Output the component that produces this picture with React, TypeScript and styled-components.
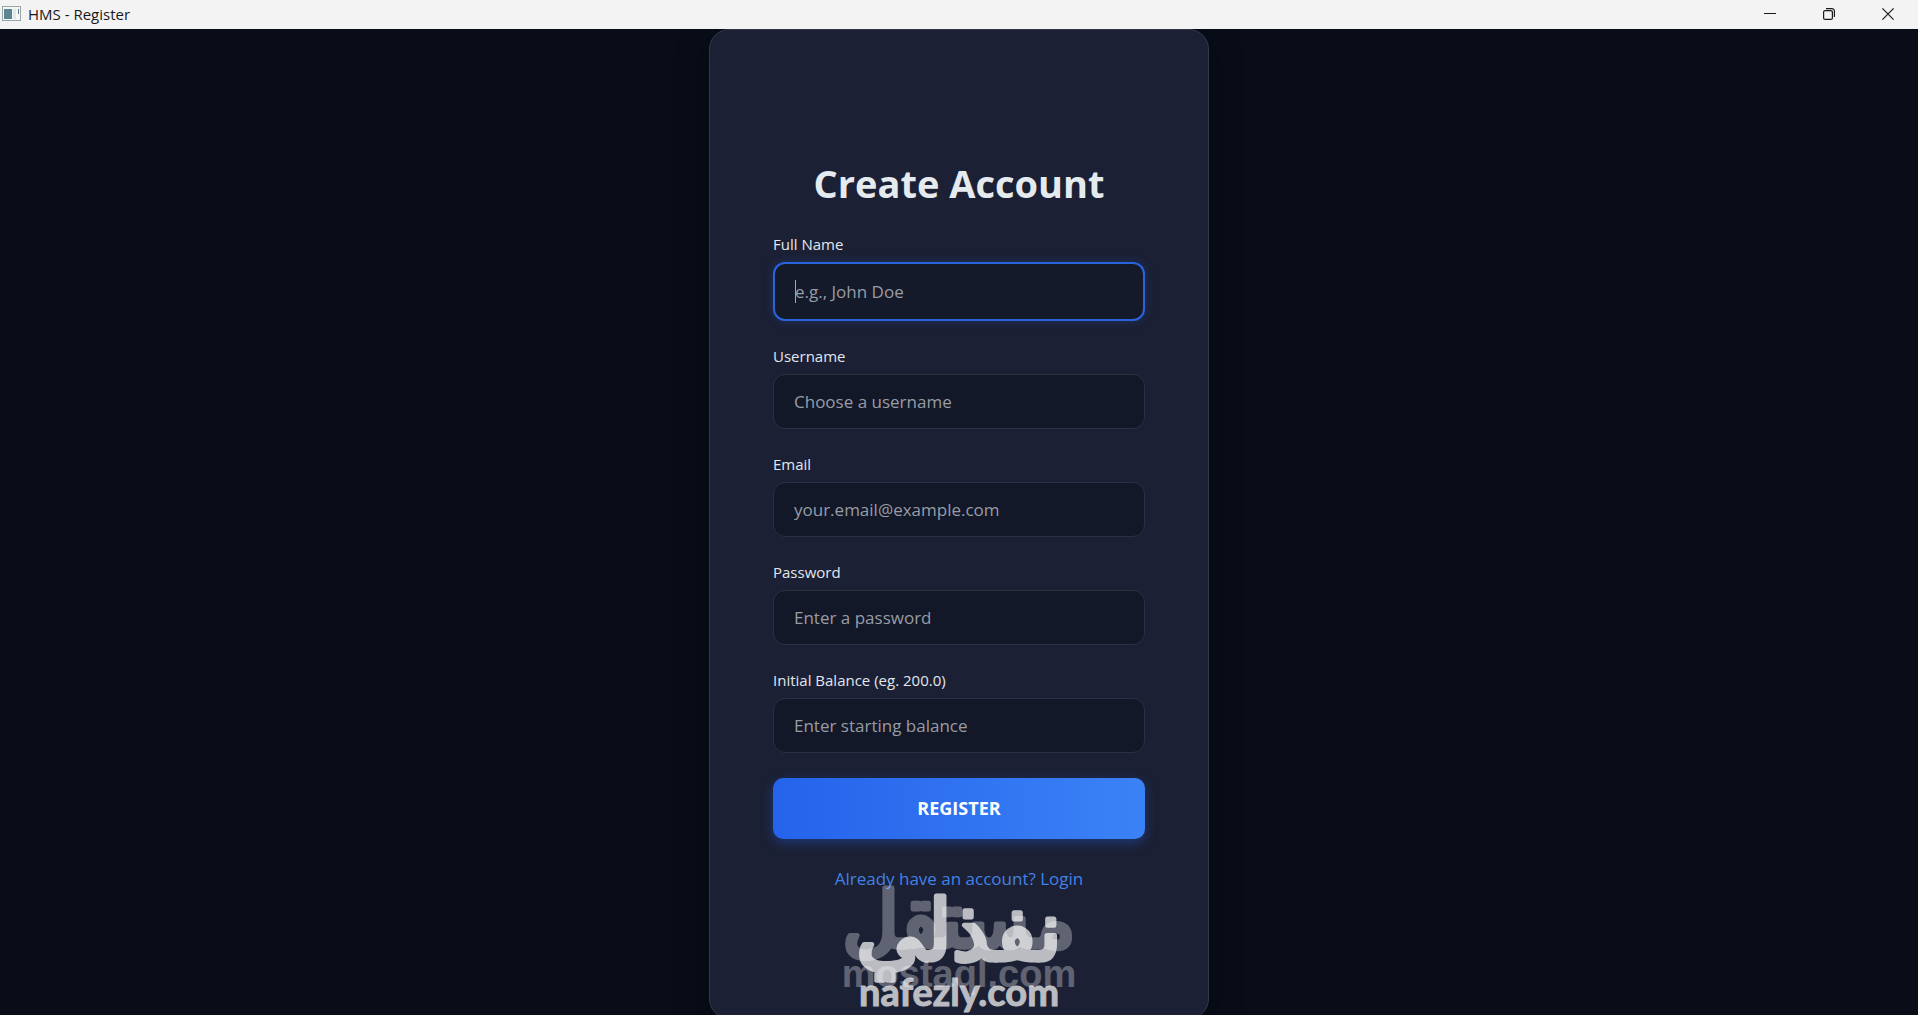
import React, { useState } from "react";
import styled, { createGlobalStyle, css } from "styled-components";

const GlobalStyle = createGlobalStyle`
  *, *::before, *::after { box-sizing: border-box; }
  html, body { margin: 0; height: 100%; overflow: hidden; }
  body {
    background: #080d18;
    font-family: "Segoe UI", "Open Sans", "Noto Sans", sans-serif;
  }
`;

const Window = styled.div`
  display: flex;
  flex-direction: column;
  height: 100vh;
  overflow: hidden;
`;

const TitleBar = styled.header`
  display: flex;
  align-items: center;
  flex: none;
  height: 29px;
  padding: 0 1px 1px 2px;
  background: #f3f3f3;
  color: #1a1a1a;
`;

const WindowTitle = styled.span`
  flex: 1;
  padding-left: 7px;
  font-size: 15px;
  line-height: 26px;
`;

const WindowButton = styled.button`
  display: flex;
  align-items: center;
  justify-content: center;
  width: 59px;
  height: 28px;
  padding: 0;
  border: 0;
  background: transparent;
  color: #1a1a1a;
`;

const Page = styled.main`
  display: flex;
  justify-content: center;
  align-items: flex-start;
  flex: 1;
  min-height: 0;
  overflow: hidden;
`;

const Card = styled.form`
  position: relative;
  display: flex;
  flex-direction: column;
  gap: 25px;
  flex: none;
  width: 500px;
  max-width: 100%;
  padding: 127px 63px 124px;
  border: 1px solid #343849;
  border-radius: 20px;
  background: #1b2034;
  box-shadow: 0 8px 32px rgba(0, 0, 0, 0.4);
`;

const Heading = styled.h1`
  margin: 0;
  color: #e5eaee;
  font-size: 38px;
  font-weight: 700;
  line-height: 52px;
  text-align: center;
  white-space: nowrap;
`;

const Field = styled.div`
  display: flex;
  flex-direction: column;
  gap: 8px;
`;

const Label = styled.label`
  color: #e2e6ee;
  font-size: 15px;
  line-height: 20px;
`;

const activeField = css`
  height: 59px;
  border: 2px solid #2a63dc;
  background: linear-gradient(#a3a7b0, #a3a7b0) 20px center / 1px 23px no-repeat, #141a29;
  box-shadow: 0 0 10px rgba(37, 99, 235, 0.25);
`;

const Input = styled.input<{ $active: boolean }>`
  width: 100%;
  height: 55px;
  padding: 0 20px;
  border: 1px solid #2c3142;
  border-radius: 12px;
  outline: none;
  background: #121827;
  color: #e5eaee;
  font-family: inherit;
  font-size: 17px;
  &::placeholder { color: #989ca6; opacity: 1; }
  ${(p) => p.$active && activeField}
`;

const RegisterButton = styled.button`
  height: 61px;
  padding: 0 20px 2px;
  border: 0;
  border-radius: 10px;
  background: linear-gradient(90deg, #2563eb, #3b82f6);
  box-shadow: 0 4px 12px rgba(37, 99, 235, 0.35);
  color: #fff;
  font-family: inherit;
  font-size: 18px;
  font-weight: 700;
`;

const LoginLink = styled.a`
  align-self: center;
  color: #4382e4;
  font-size: 17px;
  line-height: 30px;
  text-decoration: none;
`;

const Watermark = styled.svg`
  position: absolute;
  left: 50%;
  bottom: 0;
  width: 250px;
  height: 140px;
  margin-left: -125px;
  overflow: visible;
  pointer-events: none;
`;

const fields = [
  { id: "fullName", label: "Full Name", hint: "e.g., John Doe", type: "text" },
  { id: "username", label: "Username", hint: "Choose a username", type: "text" },
  { id: "email", label: "Email", hint: "your.email@example.com", type: "email" },
  { id: "password", label: "Password", hint: "Enter a password", type: "password" },
  { id: "balance", label: "Initial Balance (eg. 200.0)", hint: "Enter starting balance", type: "text" },
];

const AppIcon = () => (
  <svg width="19" height="16" viewBox="0 0 19 16" aria-hidden="true">
    <rect x="0.5" y="0.5" width="18" height="14" fill="#f4f7f7" stroke="#9aa5a8" />
    <rect x="2" y="3" width="8" height="10" fill="#5c8592" />
    <rect x="11" y="3" width="3" height="10" fill="#dfe8ea" />
    <rect x="16" y="3" width="1" height="5" fill="#5c7f8a" />
  </svg>
);

export default function App() {
  const [active, setActive] = useState("fullName");
  return (
    <Window>
      <GlobalStyle />
      <TitleBar>
        <AppIcon />
        <WindowTitle>HMS - Register</WindowTitle>
        <WindowButton type="button" aria-label="Minimize">
          <svg width="12" height="12" viewBox="0 0 12 12"><path d="M0 5.5h12" stroke="currentColor" /></svg>
        </WindowButton>
        <WindowButton type="button" aria-label="Restore">
          <svg width="12" height="12" viewBox="0 0 12 12" fill="none" stroke="currentColor" strokeWidth="1.2">
            <rect x="0.6" y="2.6" width="8.8" height="8.8" rx="1.5" />
            <path d="M3 .6h6a2.4 2.4 0 0 1 2.4 2.4v6" />
          </svg>
        </WindowButton>
        <WindowButton type="button" aria-label="Close">
          <svg width="12" height="12" viewBox="0 0 12 12"><path d="M.4.4l11.2 11.2M11.6.4.4 11.6" stroke="currentColor" strokeWidth="1.2" /></svg>
        </WindowButton>
      </TitleBar>
      <Page>
        <Card onSubmit={(e) => e.preventDefault()}>
          <Heading>Create Account</Heading>
          {fields.map((f) => (
            <Field key={f.id}>
              <Label htmlFor={f.id}>{f.label}</Label>
              <Input
                id={f.id}
                type={f.type}
                placeholder={f.hint}
                $active={active === f.id}
                onFocus={() => setActive(f.id)}
              />
            </Field>
          ))}
          <RegisterButton type="submit">REGISTER</RegisterButton>
          <LoginLink href="#login">Already have an account? Login</LoginLink>
          <Watermark viewBox="0 0 250 140" textAnchor="middle" strokeLinejoin="round">
            <g opacity="0.3" fill="#fff" stroke="#fff">
              <text x="125" y="69" fontFamily="DejaVu Sans" fontSize="78" strokeWidth="5">مستقل</text>
              <text x="125" y="109" fontFamily="Liberation Sans" fontWeight="700" fontSize="38" strokeWidth="0">mostaql.com</text>
            </g>
            <g opacity="0.7" fill="#fff" stroke="#fff">
              <text x="125" y="82" fontFamily="DejaVu Sans" fontSize="84" strokeWidth="5">نفذلي</text>
              <text x="125" y="128" fontFamily="Lato" fontWeight="700" fontSize="38" strokeWidth="1">nafezly.com</text>
            </g>
          </Watermark>
        </Card>
      </Page>
    </Window>
  );
}
